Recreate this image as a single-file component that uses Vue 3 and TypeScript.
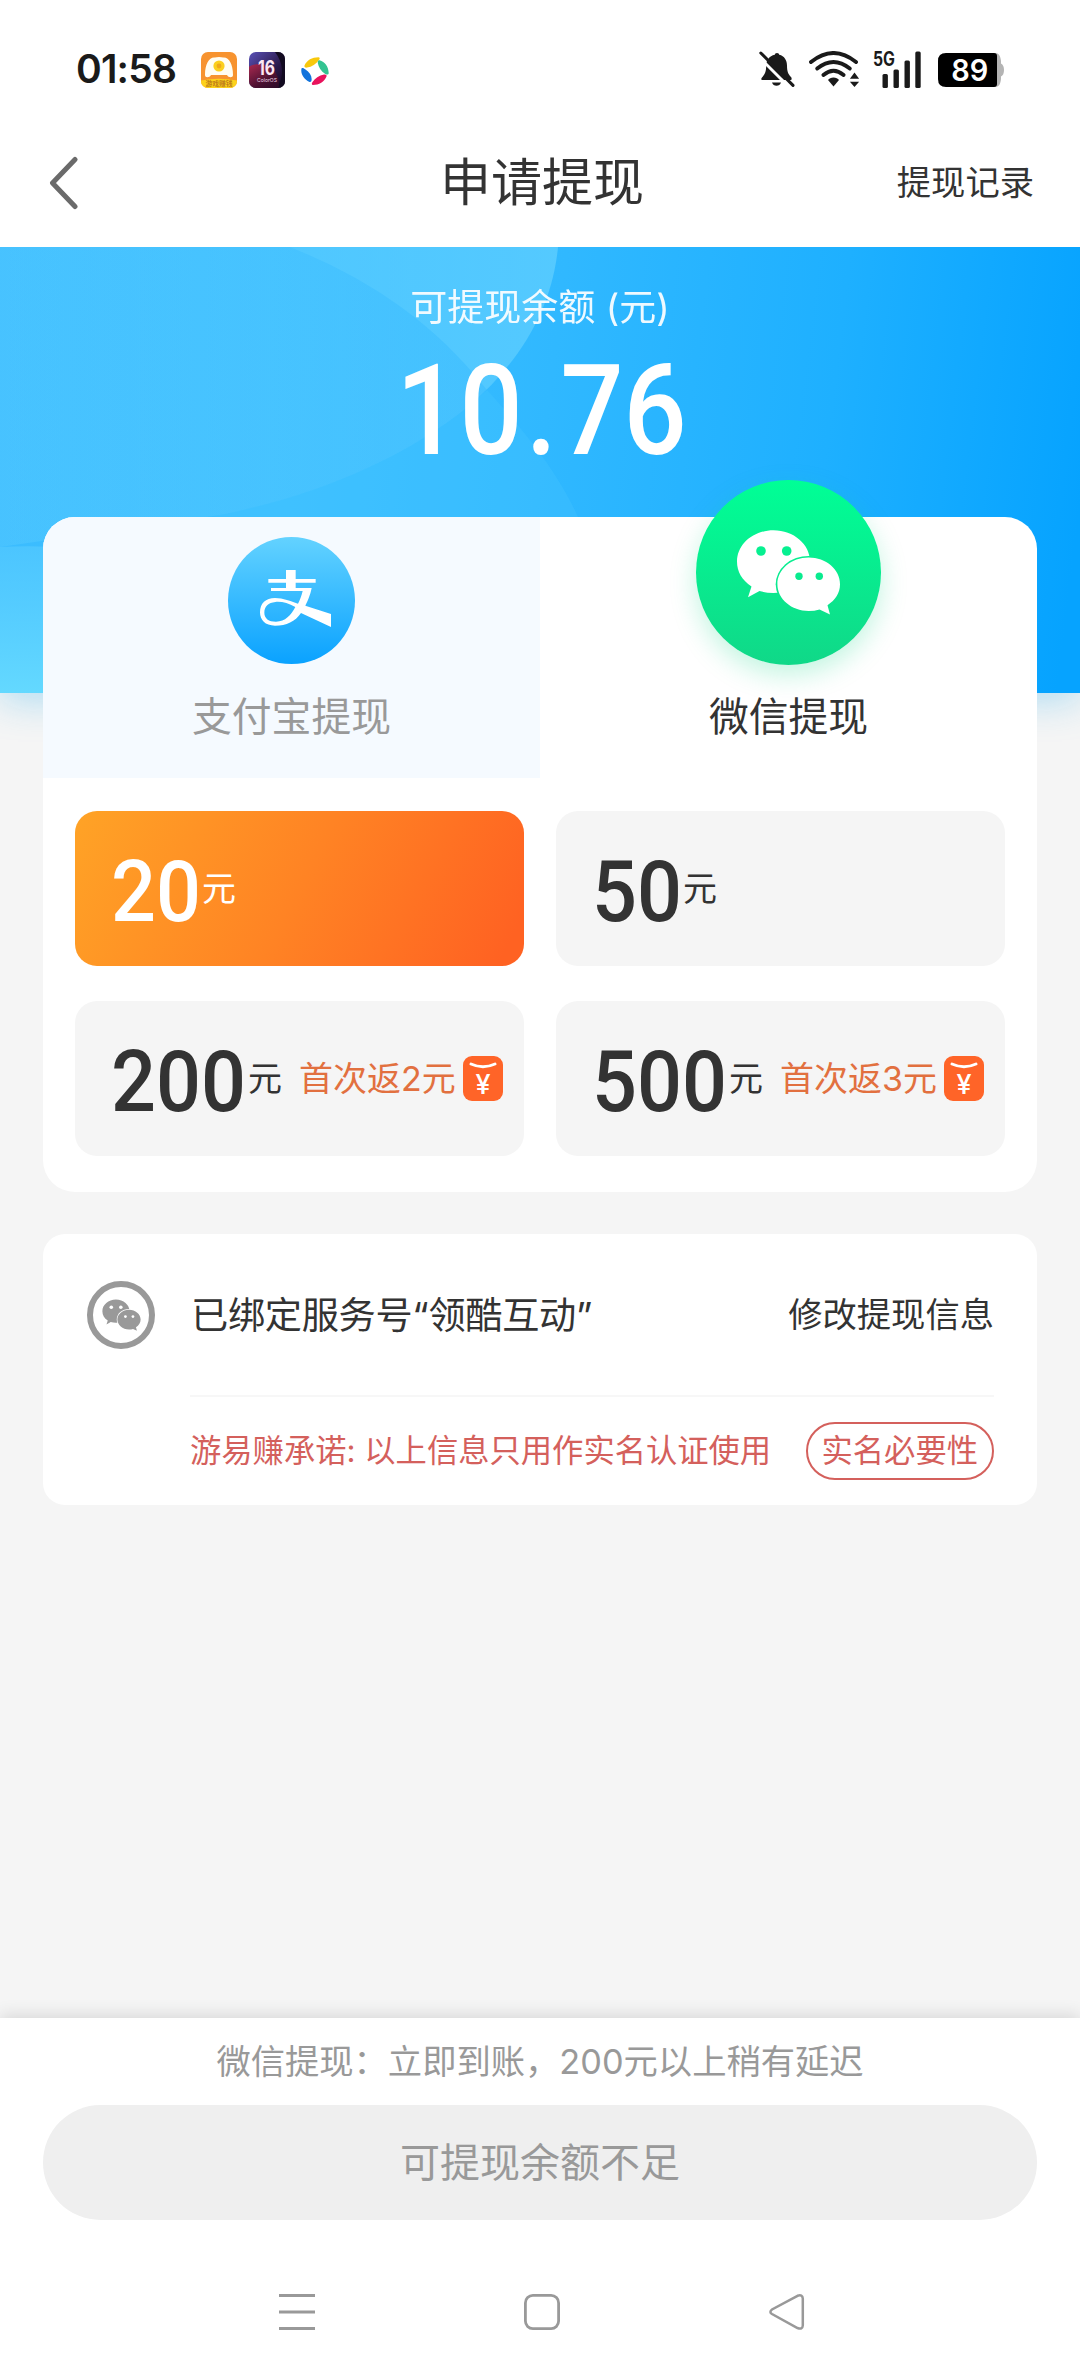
<script setup lang="ts">
interface Option {
  amount: number
  bonus?: string
}

const balance = ['1', '0', '.', '7', '6']
const options: Option[] = [
  { amount: 20 },
  { amount: 50 },
  { amount: 200, bonus: '首次返2元' },
  { amount: 500, bonus: '首次返3元' },
]
const selected = 20
</script>

<template>
  <div class="page">
    <header class="status">
      <span class="clock">01:58</span>
      <svg class="app-icon first" viewBox="0 0 36 36">
        <defs>
          <clipPath id="appClip"><rect width="36" height="36" rx="7" /></clipPath>
        </defs>
        <g clip-path="url(#appClip)">
          <rect width="36" height="36" fill="#f7932f" />
          <path d="M4 23C4 12 8 5.500 13 5.500H23C28 5.500 32 12 32 23C32 26 27.500 26 26 23H10C8.500 26 4 26 4 23Z" fill="#fffdf2" />
          <circle cx="18" cy="14" r="9" fill="#fffdf2" />
          <circle cx="18" cy="14" r="5.600" fill="#fbcf1c" />
          <circle cx="18" cy="14" r="2.400" fill="#f0a818" />
          <path d="M0 28.500Q18 25 36 28.500V36H0z" fill="#fcd21c" />
          <text x="18" y="34" text-anchor="middle" font-size="6.800" fill="#c0801a" font-weight="700">游戏赚钱</text>
        </g>
      </svg>
      <svg class="app-icon second" viewBox="0 0 36 36">
        <defs>
          <linearGradient id="osSky" x1="0" y1="0" x2="1" y2="1">
            <stop offset="0" stop-color="#5a52b8" />
            <stop offset=".6" stop-color="#2a1748" />
            <stop offset="1" stop-color="#12061c" />
          </linearGradient>
          <linearGradient id="osBall" x1="0" y1="0" x2=".6" y2="1">
            <stop offset="0" stop-color="#c02f58" />
            <stop offset=".6" stop-color="#4a1030" />
            <stop offset="1" stop-color="#1c0a24" />
          </linearGradient>
        </defs>
        <g clip-path="url(#appClip)">
          <rect width="36" height="36" fill="url(#osSky)" />
          <path d="M26 0h10v36h-8c8-12 6-26-2-36z" fill="#120a20" />
          <circle cx="10" cy="32" r="20" fill="url(#osBall)" />
          <text x="17.500" y="22.600" text-anchor="middle" font-size="20" font-weight="700" fill="#fbe6f4" textLength="17" lengthAdjust="spacingAndGlyphs">16</text>
          <text x="18" y="30" text-anchor="middle" font-size="5" fill="#f0d8ea">ColorOS</text>
        </g>
      </svg>
      <svg class="app-icon third" viewBox="0 0 28 28">
        <path d="M3.500 8.500C6 3 11 .2 17.500 .2c1.500 0 1.500 1.500.6 2.600C15 7 11 10 6 10.600c-1.800.2-3-.6-2.500-2.100z" fill="#f8c80c" />
        <path d="M18.500 3.300c5.500 1.500 9 6.500 9.200 12.700 0 1.800-2 2-3.400 1C20 14.500 17.500 10 16.800 6c-.1-1.800.3-3.100 1.700-2.700z" fill="#33c391" />
        <path d="M25.500 19.500C23.500 24.500 18 28 12 28c-1.500 0-1.500-1.600-.6-2.800C14 21.500 18 18.500 23 17.600c1.800-.3 3 .4 2.500 1.900z" fill="#e8125c" />
        <path d="M.5 11.500c1-1 2.500 0 4 1C8.500 15 11 18.500 10.600 23c-.1 1.800-1.200 2.400-2.600 1.700C2.500 22-.6 16.500.5 11.500z" fill="#1273dc" />
      </svg>
      <span class="spring"></span>
      <svg class="bell" viewBox="0 0 36 36">
        <path d="M18 2c1.400 0 2 .8 2.200 1.800C25.500 5 28 9.500 28 14.500c0 6 1.200 8.500 4 11.500.9 1 1 3-.5 3H3.500c-1.500 0-1.500-1.500-.5-2.600 3-3 4.200-6 4.200-11.900 0-5 3-9.500 8.600-10.700C16 2.800 16.600 2 18 2z" fill="#1a1a1a" />
        <path d="M13 31.500h9c-.8 2.200-2.400 3.300-4.500 3.300s-3.700-1.100-4.500-3.300z" fill="#1a1a1a" />
        <path d="M-1.500 4.500L31 37" stroke="#fff" stroke-width="3" />
        <path d="M1.800 2L34 34.400" stroke="#1a1a1a" stroke-width="3" stroke-linecap="round" />
      </svg>
      <svg class="wifi" viewBox="0 0 51 36">
        <g fill="none" stroke="#1a1a1a" stroke-width="3.900" stroke-linecap="round">
          <path d="M2 11Q24.500-7 47 11" />
          <path d="M8.200 17.500Q24.500 4.500 40.800 17.500" />
          <path d="M14.400 24Q24.500 15.500 34.600 24" />
        </g>
        <path d="M24.500 26.500c2.500 0 4.300 1 5.500 2.600L24.500 35.400 19 29.100c1.200-1.600 3-2.600 5.500-2.600z" fill="#1a1a1a" />
        <path d="M45.500 21.500l4.600 6.300h-9.200zM45.500 36l-4.600-5.200h9.200z" fill="#1a1a1a" />
      </svg>
      <svg class="signal" viewBox="-2 -8 52 54">
        <text x="0" y="15.500" font-size="19.500" font-weight="700" textLength="22" lengthAdjust="spacingAndGlyphs" fill="#1a1a1a">5G</text>
        <g fill="#1a1a1a">
          <rect x="9.500" y="24" width="5.400" height="14" rx="1.500" />
          <rect x="20.500" y="19.500" width="5.400" height="18.500" rx="1.500" />
          <rect x="31.500" y="10.500" width="5.400" height="27.500" rx="1.500" />
          <rect x="42.300" y="1.500" width="5.400" height="36.500" rx="1.500" />
        </g>
      </svg>
      <svg class="battery" viewBox="0 0 66 34">
        <path d="M52 0h5c4 0 5.500 3 6 8v2.500q3 1.500 3 6.500t-3 6.500V26c-.5 5-2 8-6 8h-5z" fill="#b4b4b4" />
        <path d="M8 0H56q3 0 3 3V31q0 3-3 3H8q-8 0-8-8V8q0-8 8-8z" fill="#000" />
        <text x="31.700" y="28" text-anchor="middle" font-size="30" font-weight="600" fill="#fff" textLength="37" lengthAdjust="spacingAndGlyphs">89</text>
      </svg>
    </header>

    <nav class="titlebar">
      <svg class="back" viewBox="0 0 30 54" fill="none">
        <path d="M27 3.500L4.500 27L27 50.500" stroke="#6a6a6a" stroke-width="5" stroke-linecap="round" stroke-linejoin="round" />
      </svg>
      <h1>申请提现</h1>
      <a class="records">提现记录</a>
    </nav>

    <section class="hero">
      <svg class="waves" viewBox="0 0 1080 446" preserveAspectRatio="none">
        <defs>
          <linearGradient id="wedge" x1="0" y1="0" x2="1" y2="0">
            <stop offset="0" stop-color="#5accff" stop-opacity=".4" />
            <stop offset="1" stop-color="#62d0ff" stop-opacity=".72" />
          </linearGradient>
          <linearGradient id="arc" x1="0" y1="0" x2="1" y2="0">
            <stop offset="0" stop-color="#20b0ff" stop-opacity="0" />
            <stop offset="1" stop-color="#2fb6ff" stop-opacity=".38" />
          </linearGradient>
          <linearGradient id="foam" x1="0" y1="0" x2="0" y2="1">
            <stop offset="0" stop-color="#60d0ff" stop-opacity=".45" />
            <stop offset="1" stop-color="#68dcff" stop-opacity=".9" />
          </linearGradient>
        </defs>
        <path d="M0 0H558C552 62 520 115 470 158C400 215 310 250 220 268L0 300Z" fill="url(#wedge)" />
        <path d="M0 0H290C360 28 430 70 487 143L470 158C400 215 310 250 220 268L0 300Z" fill="url(#arc)" />
        <path d="M487 143C530 190 560 230 578 270V300H100L220 268C310 250 400 215 470 158Z" fill="#48c6ff" opacity=".3" />
        <path d="M0 300Q100 294 200 330L260 446H0Z" fill="url(#foam)" />
      </svg>
      <p class="hero-label">可提现余额 (元)</p>
      <p class="balance"><span v-for="(c, i) in balance" :key="i" :class="{ dot: c === '.' }">{{ c }}</span></p>
    </section>

    <main class="card">
      <div class="tabs">
        <div class="tab alipay">
          <svg class="ali" viewBox="84 171 381 381">
            <defs>
              <linearGradient id="aliBg" x1="0" y1="0" x2="0" y2="1">
                <stop offset="0" stop-color="#63d2ff" />
                <stop offset="1" stop-color="#0aa2ff" />
              </linearGradient>
            </defs>
            <circle cx="274.500" cy="361.500" r="190.500" fill="url(#aliBg)" />
            <g fill="#fff">
              <path d="M258 270H287V327H258Z" />
              <path d="M205 297H347V308H205Z" />
              <path fill-rule="evenodd" d="M213 324H335C331 345 322 365 316 377L393 402V441L303 399C285 425 260 437 225 437C195 437 180 420 180 397C180 370 197 354 225 354C250 354 272 364 294 371C300 360 305 345 308 333H213ZM286 381C265 370 245 364 226 366C205 368 193 380 193 398C193 415 206 425 228 425C256 425 273 405 286 381Z" />
            </g>
          </svg>
          <span>支付宝提现</span>
        </div>
        <div class="tab wechat">
          <div class="wx-ball">
            <svg viewBox="0 0 105 86">
              <defs>
                <mask id="bubbleBack">
                  <rect width="105" height="86" fill="#fff" />
                  <circle cx="25" cy="22" r="4.800" fill="#000" />
                  <circle cx="50.700" cy="22" r="4.800" fill="#000" />
                  <ellipse cx="72.700" cy="55.300" rx="33" ry="28.400" fill="#000" />
                </mask>
                <mask id="bubbleFront">
                  <rect width="105" height="86" fill="#fff" />
                  <circle cx="63" cy="47.300" r="3.700" fill="#000" />
                  <circle cx="83.300" cy="47.300" r="3.700" fill="#000" />
                </mask>
                <g id="bubbles">
                  <path mask="url(#bubbleBack)" d="M37.500 1.300C57.700 1.300 74 15.300 74 32.600S57.700 64 37.500 64Q30 64 23.500 62L12 68.300 15.500 57.500C6 51.500 1 42.500 1 32.600C1 15.300 17.300 1.300 37.500 1.300Z" />
                  <path mask="url(#bubbleFront)" d="M72.700 28.600C90 28.600 104 40.500 104 55.300C104 64 99.500 71 91.500 76.200L94 85.400 83.500 80.400Q78.500 82 72.700 82C55.400 82 41.400 70 41.400 55.300S55.400 28.600 72.700 28.600Z" />
                </g>
              </defs>
              <use href="#bubbles" fill="#fff" />
            </svg>
          </div>
          <span>微信提现</span>
        </div>
      </div>
      <div class="options">
        <div v-for="o in options" :key="o.amount" class="option" :class="{ active: o.amount === selected }">
          <span class="amount" :class="{ wide: o.amount > 99 }"><b>{{ o.amount }}</b></span>
          <span class="unit">元</span>
          <template v-if="o.bonus">
            <span class="bonus">{{ o.bonus }}</span>
            <svg class="packet" viewBox="0 0 40 45">
              <rect width="40" height="45" rx="9" fill="#ff6428" />
              <path d="M8 8Q20 13.500 32 8" fill="none" stroke="#fff" stroke-width="3" stroke-linecap="round" />
              <text x="20" y="37.500" text-anchor="middle" font-size="27" font-weight="500" fill="#fff">¥</text>
            </svg>
          </template>
        </div>
      </div>
    </main>

    <section class="info">
      <div class="bind">
        <div class="ring">
          <svg viewBox="0 0 105 86"><use href="#bubbles" fill="#999" /></svg>
        </div>
        <span class="bound">已绑定服务号“领酷互动”</span>
        <a class="edit">修改提现信息</a>
      </div>
      <div class="promise">
        <span>游易赚承诺: 以上信息只用作实名认证使用</span>
        <a class="why">实名必要性</a>
      </div>
    </section>

    <footer class="bottom">
      <p>微信提现：立即到账，200元以上稍有延迟</p>
      <button type="button" disabled>可提现余额不足</button>
      <div class="sysnav">
        <svg viewBox="0 0 36 36" stroke="#999" stroke-width="3">
          <path d="M0 1.500H36M0 18H36M0 34.500H36" />
        </svg>
        <svg viewBox="0 0 36 36" fill="none" stroke="#999" stroke-width="2.800">
          <rect x="1.400" y="1.400" width="33.200" height="33.200" rx="7.500" />
        </svg>
        <svg viewBox="0 0 36 36" fill="none" stroke="#999" stroke-width="2.500">
          <path d="M28.500 1.800L3 15.500Q-.2 18 3 20L28.500 34Q33.500 36 33.800 31.500V4.500Q33.500 0 28.500 1.800Z" />
        </svg>
      </div>
    </footer>
  </div>
</template>

<style>
body {
  margin: 0;
}
</style>

<style scoped>
.page {
  width: 1080px;
  height: 2378px;
  display: flex;
  flex-direction: column;
  background: #f5f5f5;
  overflow: hidden;
  color: #333;
  font-family: Inter, "Noto Sans CJK SC", sans-serif;
  white-space: nowrap;
}
svg {
  display: block;
  flex: none;
}
p,
h1 {
  margin: 0;
}
.status {
  height: 140px;
  padding: 0 76px 0 76px;
  display: flex;
  align-items: center;
  background: #fff;
  box-sizing: border-box;
}
.clock {
  width: 125px;
  font-size: 39px;
  font-weight: 600;
  line-height: 44px;
  letter-spacing: -0.8px;
  color: #1a1a1a;
  margin-top: -2px;
}
.app-icon {
  width: 36px;
  height: 36px;
  margin-right: 12px;
}
.third {
  width: 28px;
  height: 28px;
  margin: 1px 0 0 4px;
}
.spring {
  flex: 1;
}
.bell {
  width: 36px;
  height: 36px;
  margin: -2px 14px 0 0;
}
.wifi {
  width: 51px;
  height: 36px;
  margin: -3px 11px 0 0;
}
.signal {
  width: 52px;
  height: 54px;
  margin: -2px 15px 0 0;
}
.battery {
  width: 66px;
  height: 34px;
}
.titlebar {
  position: relative;
  z-index: 1;
  height: 107px;
  padding: 0 46px 0 48px;
  display: grid;
  grid-template-columns: 1fr auto 1fr;
  align-items: center;
  background: #fff;
  box-sizing: border-box;
}
.titlebar > * {
  margin-top: -22px;
}
.back {
  width: 30px;
  height: 54px;
}
h1 {
  margin-right: -2px;
  font-size: 51px;
  font-weight: 400;
  line-height: 60px;
}
.records {
  justify-self: end;
  font-size: 34.3px;
  line-height: 50px;
}
.hero {
  position: relative;
  flex: none;
  height: 446px;
  background: linear-gradient(97deg, #3bbcff 0%, #3cbfff 28%, #30b8ff 50%, #1eb0ff 75%, #06a3ff 98%);
  box-shadow: 0 8px 36px rgba(30, 170, 240, 0.32);
  color: #fff;
  text-align: center;
}
.waves {
  position: absolute;
  inset: 0;
  width: 1080px;
  height: 446px;
}
.hero-label {
  position: relative;
  padding-top: 36px;
  font-size: 37px;
  line-height: 50px;
  opacity: 0.92;
}
.balance {
  position: relative;
  font-family: Roboto, sans-serif;
  font-size: 127px;
  font-weight: 500;
  line-height: 140px;
  margin: 8px 0 0 3px;
  transform: scaleX(0.875);
}
.balance .dot {
  padding: 0 4px;
}
.card {
  position: relative;
  flex: none;
  margin: -178px 43px 0;
  top: 2px;
  height: 675px;
  border-radius: 32px;
  background: #fff;
}
.tabs {
  display: flex;
  height: 261px;
}
.tab {
  flex: 1;
  display: flex;
  flex-direction: column;
  align-items: center;
  font-size: 39.8px;
  line-height: 50px;
}
.alipay {
  background: #f5faff;
  border-radius: 32px 0 0 0;
  color: #999;
}
.ali {
  width: 127px;
  height: 127px;
  margin: 20px 0 28px;
}
.wx-ball {
  width: 185px;
  height: 185px;
  margin: -37px 0 27px;
  border-radius: 50%;
  background: linear-gradient(#00ff96, #10d888);
  box-shadow: 0 10px 26px rgba(16, 216, 136, 0.25);
  display: flex;
  align-items: center;
  justify-content: center;
}
.wx-ball svg {
  width: 105px;
  height: 86px;
  margin-top: -2px;
}
.options {
  display: grid;
  grid-template-columns: 449px 449px;
  gap: 35px 32px;
  padding: 33px 32px 0;
}
.option {
  height: 155px;
  padding-left: 36px;
  box-sizing: border-box;
  border-radius: 22px;
  background: #f5f5f5;
  display: flex;
  align-items: center;
}
.option.active {
  background: linear-gradient(117deg, #ffa326 0%, #ff8324 50%, #ff6222 95%);
  color: #fff;
}
.amount {
  width: 91px;
  font-family: Roboto, sans-serif;
  font-size: 86px;
  line-height: 100px;
  padding-top: 7px;
}
.amount.wide {
  width: 137px;
}
.amount b {
  display: inline-block;
  font-weight: 500;
  transform: scaleX(0.92);
  transform-origin: 0 50%;
}
.unit {
  font-size: 34px;
  line-height: 50px;
}
.bonus {
  width: 157px;
  margin-left: 17px;
  font-size: 34px;
  line-height: 50px;
  color: #e2703f;
}
.packet {
  width: 40px;
  height: 45px;
  margin-left: 7px;
}
.info {
  flex: none;
  margin: 44px 43px 0;
  height: 271px;
  border-radius: 22px;
  background: #fff;
}
.bind {
  display: flex;
  align-items: center;
  height: 161px;
  padding: 0 43px 0 44px;
}
.ring {
  width: 68px;
  height: 68px;
  box-sizing: border-box;
  border: 6px solid #999;
  border-radius: 50%;
  display: flex;
  align-items: center;
  justify-content: center;
}
.ring svg {
  width: 39px;
  height: 32px;
}
.bound {
  flex: 1;
  margin-left: 36px;
  padding-top: 2px;
  font-size: 37.2px;
  letter-spacing: -0.3px;
  line-height: 50px;
}
.edit {
  padding-top: 1px;
  font-size: 34.3px;
  line-height: 50px;
}
.promise {
  display: flex;
  align-items: center;
  justify-content: space-between;
  height: 108px;
  margin: 0 43px 0 147px;
  border-top: 2px solid #f7f7f7;
  font-size: 31.3px;
  line-height: 44px;
  color: #d4605c;
}
.why {
  height: 54px;
  line-height: 54px;
  padding: 0 14px;
  border: 2px solid #d4605c;
  border-radius: 30px;
}
.bottom {
  margin-top: auto;
  flex: none;
  height: 360px;
  background: #fff;
  box-shadow: 0 -3px 16px rgba(0, 0, 0, 0.12);
  color: #999;
  text-align: center;
}
.bottom p {
  padding-top: 19px;
  font-size: 34.3px;
  line-height: 50px;
}
.bottom button {
  display: block;
  width: 994px;
  height: 115px;
  margin: 18px auto 0;
  padding: 0 0 5px;
  border: 0;
  border-radius: 58px;
  background: #efefef;
  font: inherit;
  font-size: 40px;
  color: #999;
}
.sysnav {
  display: flex;
  justify-content: space-between;
  margin: 74px 275px 0 279px;
}
.sysnav svg {
  width: 36px;
  height: 36px;
}
</style>
